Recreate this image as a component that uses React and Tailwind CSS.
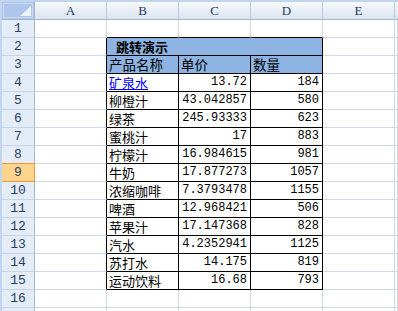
import React from 'react';

// sheet data, rows 4..15 of the table
const items = [
  ['矿泉水', '13.72', '184', true],
  ['柳橙汁', '43.042857', '580'],
  ['绿茶', '245.93333', '623'],
  ['蜜桃汁', '17', '883'],
  ['柠檬汁', '16.984615', '981'],
  ['牛奶', '17.877273', '1057'],
  ['浓缩咖啡', '7.3793478', '1155'],
  ['啤酒', '12.968421', '506'],
  ['苹果汁', '17.147368', '828'],
  ['汽水', '4.2352941', '1125'],
  ['苏打水', '14.175', '819'],
  ['运动饮料', '16.68', '793'],
];

function RowHead({ n }) {
  if (n === 9) {
    return (
      <div className="w-[33px] h-[18px] shrink-0 flex items-center justify-center bg-[#ffd58d] border-r border-b border-r-[#f29536] border-b-[#f29536] text-[13px] leading-[14px] text-[#27415f] pt-[1px]">
        {n}
      </div>
    );
  }
  return (
    <div
      className={
        'w-[33px] h-[18px] shrink-0 flex items-center justify-center bg-[#e4ecf7] border-r border-b border-r-[#9eb6ce] text-[13px] leading-[14px] text-[#27415f] pt-[1px] ' +
        (n === 8 ? 'border-b-[#f29536]' : 'border-b-[#c6d3e4]')
      }
    >
      {n}
    </div>
  );
}

// plain gridline cell
function Cell({ className = '', children }) {
  return (
    <div className={'h-[18px] shrink-0 border-r border-b flex items-end whitespace-nowrap ' + className}>
      {children}
    </div>
  );
}

function EmptyRow({ n, blackBottom }) {
  return (
    <div className="flex">
      <RowHead n={n} />
      <Cell className="w-[72px] border-[#d0d7e5]" />
      {[0, 1, 2].map((i) => (
        <Cell
          key={i}
          className={'w-[72px] border-r-[#d0d7e5] ' + (blackBottom ? 'border-b-black' : 'border-b-[#d0d7e5]')}
        />
      ))}
      <Cell className="w-[72px] border-[#d0d7e5]" />
      <Cell className="grow border-[#d0d7e5]" />
    </div>
  );
}

export default function App() {
  return (
    <div className="w-[398px] h-[311px] overflow-hidden bg-white border-t-2 border-l-2 border-[#c2d5ee] font-['Liberation_Mono','Noto_Sans_CJK_SC',monospace] text-black">
      {/* column headers */}
      <div className="flex">
        <div className="relative w-[33px] h-[18px] shrink-0 bg-[#adc6ea] border-r border-b border-[#9eb6ce]">
          <div className="absolute inset-[1px] border border-[#cad9f0]" />
          <svg className="absolute right-[3px] bottom-[3px]" width="11" height="10" viewBox="0 0 11 10">
            <polygon points="11,0 11,10 0,10" fill="#eef3fa" />
          </svg>
        </div>
        {['A', 'B', 'C', 'D', 'E'].map((c) => (
          <div
            key={c}
            className="w-[72px] h-[18px] shrink-0 flex items-center justify-center bg-linear-to-b from-[#f7f9fc] to-[#dae3ef] border-r border-b border-r-[#b7c9de] border-b-[#9eb6ce] font-['Liberation_Serif',serif] text-[13px] text-[#1f3b5d]"
          >
            {c}
          </div>
        ))}
        <div className="grow h-[18px] bg-linear-to-b from-[#f7f9fc] to-[#dae3ef] border-b border-[#9eb6ce]" />
      </div>

      <EmptyRow n={1} blackBottom />

      {/* title row, merged B2:D2 */}
      <div className="flex">
        <RowHead n={2} />
        <Cell className="w-[72px] border-r-black border-b-[#d0d7e5]" />
        <Cell className="w-[216px] bg-[#8db4e2] border-black pl-[9px] pb-[1px]">
          <span className="font-['Noto_Sans_CJK_SC',sans-serif] font-bold text-[13px] leading-[15px]">跳转演示</span>
        </Cell>
        <Cell className="w-[72px] border-[#d0d7e5]" />
        <Cell className="grow border-[#d0d7e5]" />
      </div>

      {/* column titles */}
      <div className="flex">
        <RowHead n={3} />
        <Cell className="w-[72px] border-r-black border-b-[#d0d7e5]" />
        {['产品名称', '单价', '数量'].map((t) => (
          <Cell key={t} className="w-[72px] bg-[#8db4e2] border-black pl-[2px] pb-[1px]">
            <span className="font-['Noto_Sans_CJK_SC',sans-serif] text-[13.5px] leading-[15px]">{t}</span>
          </Cell>
        ))}
        <Cell className="w-[72px] border-[#d0d7e5]" />
        <Cell className="grow border-[#d0d7e5]" />
      </div>

      {items.map(([name, price, qty, link], i) => (
        <div key={name} className="flex">
          <RowHead n={i + 4} />
          <Cell className="w-[72px] border-r-black border-b-[#d0d7e5]" />
          <Cell className="w-[72px] border-black pl-[2px] pb-[1px]">
            <span
              className={
                "font-['Noto_Sans_CJK_SC',sans-serif] text-[13px] leading-[15px] " +
                (link ? 'text-[#0000ff] underline underline-offset-[1px]' : '')
              }
            >
              {name}
            </span>
          </Cell>
          <Cell className="w-[72px] border-black justify-end pr-[3px] pb-[2px]">
            <span className="text-[12px] leading-[13px]">{price}</span>
          </Cell>
          <Cell className="w-[72px] border-black justify-end pr-[3px] pb-[2px]">
            <span className="text-[12px] leading-[13px]">{qty}</span>
          </Cell>
          <Cell className="w-[72px] border-[#d0d7e5]" />
          <Cell className="grow border-[#d0d7e5]" />
        </div>
      ))}

      <EmptyRow n={16} />
      <EmptyRow n={17} />
    </div>
  );
}
